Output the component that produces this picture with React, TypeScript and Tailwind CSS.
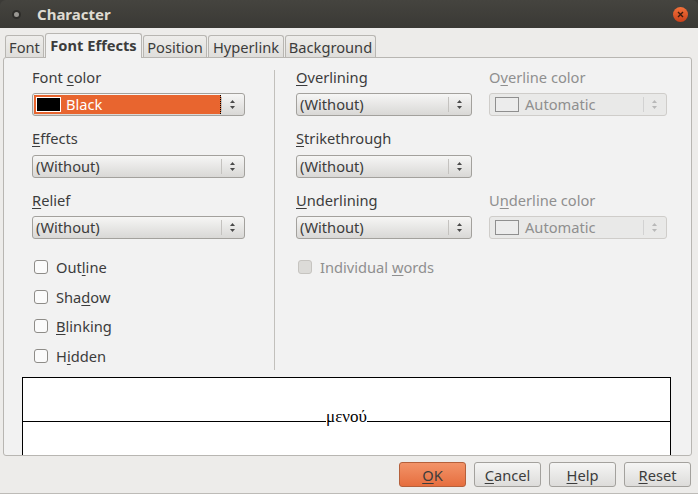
import React from "react";

const font = { fontFamily: '"Noto Sans", "Open Sans", sans-serif' };

function U({ children }: { children: React.ReactNode }) {
  return <span className="underline underline-offset-2 decoration-1">{children}</span>;
}

function Arrows({ disabled }: { disabled?: boolean }) {
  const c = disabled ? "#b8b8b8" : "#4a4a4a";
  return (
    <div className="flex items-center h-full">
      <div className={`w-px h-[15px] ${disabled ? "bg-[#d2d2d2]" : "bg-[#c4c2bf]"}`} />
      <svg width="21" height="21" viewBox="0 0 21 21">
        <path d="M8 9 L10.5 6 L13 9 Z" fill={c} />
        <path d="M8 12 L10.5 15 L13 12 Z" fill={c} />
      </svg>
    </div>
  );
}

function Select({ text, w }: { text: string; w: string }) {
  return (
    <div
      className={`${w} h-[23px] flex items-center justify-between rounded-[3px] border border-[#a3a19d] bg-gradient-to-b from-[#f6f6f5] to-[#d9d8d6] pl-[3px] pr-[1px] text-[#3c3c3c]`}
    >
      <span className="leading-none">{text}</span>
      <Arrows />
    </div>
  );
}

function ColorSelect({ w, active }: { w: string; active?: boolean }) {
  if (active) {
    return (
      <div
        className={`${w} h-[23px] flex items-center justify-between rounded-[3px] border border-[#a3a19d] bg-gradient-to-b from-[#f6f6f5] to-[#d9d8d6] p-px pr-[1px]`}
      >
        <div className="flex-1 h-full flex items-center bg-[#e8652f] border-r border-dotted border-black">
          <div className="w-[25px] h-[15px] ml-[2px] bg-black border border-white" />
          <span className="ml-[5px] text-white leading-none">Black</span>
        </div>
        <Arrows />
      </div>
    );
  }
  return (
    <div
      className={`${w} h-[23px] flex items-center justify-between rounded-[3px] border border-[#cfcdca] bg-[#e9e9e8] pl-[5px] pr-[1px] text-[#8f8f8f]`}
    >
      <div className="flex items-center">
        <div className="w-[24px] h-[15px] border border-[#8f8f8f] bg-[#ececec]" />
        <span className="ml-[6px] leading-none">Automatic</span>
      </div>
      <Arrows disabled />
    </div>
  );
}

function Check({ children, disabled }: { children: React.ReactNode; disabled?: boolean }) {
  return (
    <div className="flex items-center h-[20px]">
      <div
        className={`w-[14px] h-[14px] rounded-[3px] border ${
          disabled ? "border-[#c6c4c0] bg-[#dcdbd8]" : "border-[#8e8c88] bg-[#fbfbfb]"
        }`}
      />
      <span className={`ml-[8px] ${disabled ? "text-[#8f8f8f]" : "text-[#3c3c3c]"}`}>{children}</span>
    </div>
  );
}

function Btn({ children, primary }: { children: React.ReactNode; primary?: boolean }) {
  return (
    <div
      className={`w-[67px] h-[25px] flex items-center justify-center rounded-[3px] border ${
        primary
          ? "border-[#b5603b] bg-gradient-to-b from-[#f29368] to-[#e66e3e] text-[#3c3c3c]"
          : "border-[#a3a19d] bg-gradient-to-b from-[#f5f5f4] to-[#dddcda] text-[#3c3c3c]"
      }`}
    >
      {children}
    </div>
  );
}

function Tab({ children, w }: { children: React.ReactNode; w: string }) {
  return (
    <div
      className={`${w} h-[22px] flex items-center justify-center rounded-t-[3px] border border-b-0 border-[#b8b6b2] bg-gradient-to-b from-[#eeedeb] to-[#dfdedb]`}
    >
      {children}
    </div>
  );
}

export default function App() {
  return (
    <div className="w-[698px] h-[494px] bg-[#3c3b37] overflow-hidden text-[14.67px]" style={font}>
      {/* Title bar */}
      <div className="h-[28px] rounded-t-[6px] bg-gradient-to-b from-[#45443f] to-[#3a3935] flex items-center pl-[12px] pr-[10px]">
        <div className="w-[9px] h-[9px] rounded-full bg-[#9a9893] border-2 border-[#2e2d2a]" />
        <span className="ml-[16px] font-bold text-[15px] text-[#dfdbd2]">Character</span>
        <div className="ml-auto w-[15px] h-[15px] rounded-full bg-gradient-to-b from-[#f4713a] to-[#c9401a] flex items-center justify-center">
          <svg width="7" height="7" viewBox="0 0 7 7">
            <path d="M1 1 L6 6 M6 1 L1 6" stroke="#3a1c0e" strokeWidth="1.4" />
          </svg>
        </div>
      </div>

      {/* Body */}
      <div className="h-[466px] bg-[#edecea] border-b border-[#bdbbb7] flex flex-col px-[3px]">
        {/* Tabs */}
        <div className="flex items-end h-[29px] pl-[2px] gap-px text-[#3c3c3c]">
          <Tab w="w-[39px]">Font</Tab>
          <div className="w-[97px] h-[25px] flex items-center justify-center rounded-t-[3px] border border-b-0 border-[#b8b6b2] bg-[#f2f2f2] font-bold -mb-px relative z-10 pb-[2px]">
            Font Effects
          </div>
          <Tab w="w-[64px]">Position</Tab>
          <Tab w="w-[76px]">Hyperlink</Tab>
          <Tab w="w-[91px]">Background</Tab>
        </div>

        {/* Panel */}
        <div className="h-[399px] w-[689px] rounded-[3px] border border-[#b8b6b2] bg-[#f2f2f2] overflow-hidden flex flex-col">
          <div className="flex pt-[11px] h-[319px] text-[#3c3c3c]">
            {/* Left column */}
            <div className="ml-[28px] w-[213px] flex flex-col">
              <div className="h-[17px] leading-[17px]">
                Font <U>c</U>olor
              </div>
              <div className="mt-[7px]">
                <ColorSelect w="w-[213px]" active />
              </div>
              <div className="mt-[14px] h-[17px] leading-[17px]">
                <U>E</U>ffects
              </div>
              <div className="mt-[8px]">
                <Select text="(Without)" w="w-[213px]" />
              </div>
              <div className="mt-[14px] h-[17px] leading-[17px]">
                <U>R</U>elief
              </div>
              <div className="mt-[7px]">
                <Select text="(Without)" w="w-[213px]" />
              </div>
              <div className="mt-[18px] pl-[2px] flex flex-col gap-[9.5px]">
                <Check>
                  Out<U>l</U>ine
                </Check>
                <Check>
                  Sha<U>d</U>ow
                </Check>
                <Check>
                  <U>B</U>linking
                </Check>
                <Check>
                  H<U>i</U>dden
                </Check>
              </div>
            </div>

            {/* Divider */}
            <div className="ml-[29px] w-px bg-[#c2c0bc] mt-[1px] h-[300px]" />

            {/* Right */}
            <div className="ml-[21px] flex flex-col">
              <div className="flex gap-[17px]">
                <div className="w-[176px] flex flex-col">
                  <div className="h-[17px] leading-[17px]">
                    <U>O</U>verlining
                  </div>
                  <div className="mt-[7px]">
                    <Select text="(Without)" w="w-[176px]" />
                  </div>
                  <div className="mt-[14px] h-[17px] leading-[17px]">
                    <U>S</U>trikethrough
                  </div>
                  <div className="mt-[8px]">
                    <Select text="(Without)" w="w-[176px]" />
                  </div>
                  <div className="mt-[14px] h-[17px] leading-[17px]">
                    <U>U</U>nderlining
                  </div>
                  <div className="mt-[7px]">
                    <Select text="(Without)" w="w-[176px]" />
                  </div>
                </div>
                <div className="w-[178px] flex flex-col text-[#8f8f8f]">
                  <div className="h-[17px] leading-[17px]">
                    O<U>v</U>erline color
                  </div>
                  <div className="mt-[7px]">
                    <ColorSelect w="w-[178px]" />
                  </div>
                  <div className="h-[62px]" />
                  <div className="mt-[14px] h-[17px] leading-[17px]">
                    U<U>n</U>derline color
                  </div>
                  <div className="mt-[7px]">
                    <ColorSelect w="w-[178px]" />
                  </div>
                </div>
              </div>
              <div className="mt-[18px] pl-[2px]">
                <Check disabled>
                  Individual <U>w</U>ords
                </Check>
              </div>
            </div>
          </div>

          {/* Preview */}
          <div className="ml-[18px] w-[649px] flex-1 bg-white border-t border-x border-black flex flex-col">
            <div className="h-[44px] flex items-end">
              <div className="flex-1 border-b border-black" />
              <span
                className="text-[17px] leading-none text-black -mb-[3px]"
                style={{ fontFamily: '"Liberation Serif", "DejaVu Serif", serif' }}
              >
                μενού
              </span>
              <div className="flex-1 border-b border-black" />
            </div>
          </div>
        </div>

        {/* Buttons */}
        <div className="flex justify-end gap-[8px] mt-[6px] pr-[4px]">
          <Btn primary>
            <U>O</U>K
          </Btn>
          <Btn>
            <U>C</U>ancel
          </Btn>
          <Btn>
            <U>H</U>elp
          </Btn>
          <Btn>
            <U>R</U>eset
          </Btn>
        </div>
      </div>
    </div>
  );
}
